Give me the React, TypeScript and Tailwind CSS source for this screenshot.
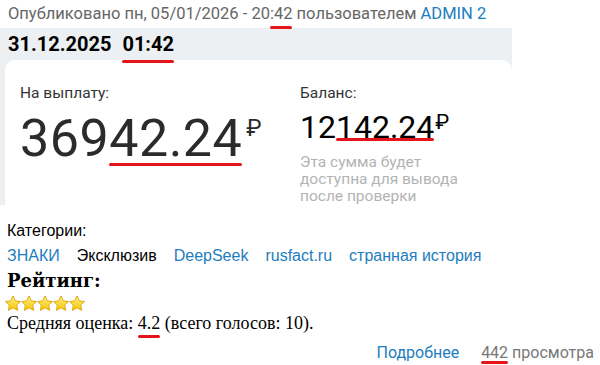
import React from 'react';

function Mark({ children, className = '' }: { children: React.ReactNode; className?: string }) {
  return (
    <span className="relative">
      {children}
      <span className={`absolute left-0 right-0 h-[3px] rounded-full bg-[#e5141b] ${className}`} />
    </span>
  );
}

function Star() {
  return (
    <svg width="16" height="17" viewBox="1 1 22 22">
      <defs>
        <linearGradient id="sg" x1="0" y1="0" x2="0" y2="1">
          <stop offset="0" stopColor="#fff48a" />
          <stop offset="1" stopColor="#f5c400" />
        </linearGradient>
      </defs>
      <path
        d="M12 1.8l3.1 6.6 7.1.9-5.2 4.9 1.3 7.1L12 17.9l-6.3 3.4 1.3-7.1L1.8 9.3l7.1-.9z"
        fill="url(#sg)"
        stroke="#d9a400"
        strokeWidth="1.3"
        strokeLinejoin="round"
      />
    </svg>
  );
}

export default function App() {
  const cats = [
    { label: 'ЗНАКИ', link: true },
    { label: 'Эксклюзив', link: false },
    { label: 'DeepSeek', link: true },
    { label: 'rusfact.ru', link: true },
    { label: 'странная история', link: true },
  ];

  return (
    <div className="w-[600px] h-[365px] bg-white overflow-hidden font-['Roboto',sans-serif]">
      {/* published */}
      <div className="h-[28px] pl-[8px] flex items-center text-[16.5px] text-[#666]">
        Опубликовано пн, 05/01/2026 - 20
        <Mark className="-bottom-[3px]">:42</Mark>
        &nbsp;пользователем&nbsp;<span className="text-[#1d7dbd]">ADMIN 2</span>
      </div>

      {/* panel */}
      <div className="w-[512px] h-[177px] bg-[#edf0f2] flex flex-col">
        <div className="h-[35px] pl-[8px] flex items-center gap-[11px] text-[20px] font-bold text-black">
          <span>31.12.2025</span>
          <Mark className="-bottom-[4px]">01:42</Mark>
        </div>
        <div className="flex-1 ml-[5px] bg-white rounded-t-[10px] flex pt-[22px]">
          <div className="w-[295px] pl-[15px]">
            <div className="text-[15.5px] text-[#333]">На выплату:</div>
            <div className="flex items-start text-[#2b2b2b] leading-none mt-[8px]">
              <span className="text-[52px] tracking-[0.5px]">
                369<Mark className="bottom-[3px]">42.24</Mark>
              </span>
              <span className="text-[23px] ml-[4px] mt-[4px]">₽</span>
            </div>
          </div>
          <div>
            <div className="text-[15.5px] text-[#333]">Баланс:</div>
            <div className="flex items-start text-black leading-none mt-[6px]">
              <span className="text-[32px]">
                12<Mark className="bottom-[5px]">142.24</Mark>
              </span>
              <span className="text-[21px] ml-[1px] mt-[1px]">₽</span>
            </div>
            <div className="text-[15.5px] leading-[17px] text-[#b3b3b3] mt-[11px]">
              Эта сумма будет
              <br />
              доступна для вывода
              <br />
              после проверки
            </div>
          </div>
        </div>
      </div>

      {/* categories */}
      <div className="pl-[7px] pt-[14px] font-['Liberation_Sans',sans-serif] text-[16px]">
        <div className="text-black leading-[24px]">Категории:</div>
        <div className="flex gap-[17px] leading-[25px]">
          {cats.map(c => (
            <span key={c.label} className={c.link ? 'text-[#1d7dbd]' : 'text-black'}>
              {c.label}
            </span>
          ))}
        </div>
      </div>

      {/* rating */}
      <div className="pl-[7px]">
        <div className="text-[18px] font-bold text-black leading-[26px] font-['DejaVu_Serif',serif]">Рейтинг:</div>
        <div className="flex -ml-[2px] mt-[1px]">
          {[0, 1, 2, 3, 4].map(i => <Star key={i} />)}
        </div>
        <div className="text-[18px] text-black leading-[22px] font-['Liberation_Serif',serif]">
          Средняя оценка: <Mark className="-bottom-[5px]">4.2</Mark> (всего голосов: 10).
        </div>
      </div>

      {/* footer */}
      <div className="flex justify-end gap-[22px] pr-[6px] mt-[8px] text-[16px] leading-[22px]">
        <span className="text-[#1d7dbd]">Подробнее</span>
        <span className="text-[#777]">
          <Mark className="-bottom-[2px]">442</Mark> просмотра
        </span>
      </div>
    </div>
  );
}
